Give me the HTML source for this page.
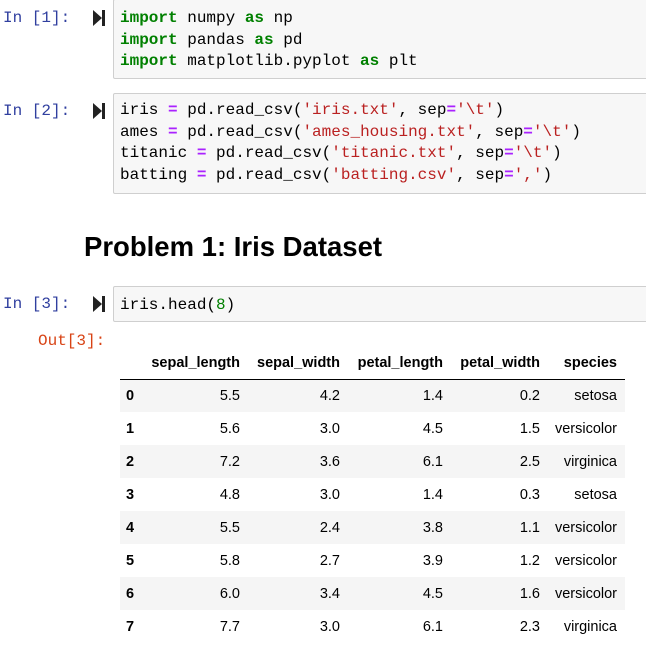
<!DOCTYPE html>
<html><head><style>
body{margin:0;width:646px;height:646px;overflow:hidden;background:#fff;position:relative;font-family:"Liberation Sans",sans-serif}
.mono{font-family:"Liberation Mono",monospace;font-size:16px}
.p{position:absolute;left:3px;color:#303F9F}
.box{position:absolute;left:113px;width:560px;background:#f7f7f7;border:1px solid #cfcfcf;border-radius:2px;box-sizing:border-box}
.code{position:absolute;left:6px;white-space:pre;line-height:21.7px;color:#000}
.k{color:#008000;font-weight:bold}.o{color:#AA22FF;font-weight:bold}.s{color:#BA2121}.n{color:#008000}
.run{position:absolute;left:93px;width:12px;height:16px}
table{position:absolute;left:120px;top:348px;width:505px;table-layout:fixed;border-collapse:collapse;font-size:14.5px;color:#000}
td,th{height:33px;padding:0 0 0 0;text-align:right;box-sizing:border-box;white-space:nowrap}
th{font-weight:bold}
thead th{height:31px;border-bottom:1px solid #000}
tbody tr:nth-child(odd){background:#f5f5f5}
tbody th{text-align:left;padding-left:6px}
</style></head><body>
<div class="mono p" style="top:9px">In [1]:</div>
<svg class="run" style="top:10px" viewBox="0 0 12 16"><path d="M0 0L9 8L0 16Z" fill="#222"/><rect x="9" y="0" width="3" height="16" fill="#222"/></svg>
<div class="box" style="top:-1px;height:80px"><div class="code mono" style="top:8px"><span class="k">import</span> numpy <span class="k">as</span> np
<span class="k">import</span> pandas <span class="k">as</span> pd
<span class="k">import</span> matplotlib.pyplot <span class="k">as</span> plt</div></div>

<div class="mono p" style="top:102px">In [2]:</div>
<svg class="run" style="top:103px" viewBox="0 0 12 16"><path d="M0 0L9 8L0 16Z" fill="#222"/><rect x="9" y="0" width="3" height="16" fill="#222"/></svg>
<div class="box" style="top:93px;height:101px"><div class="code mono" style="top:6px">iris <span class="o">=</span> pd.read_csv(<span class="s">'iris.txt'</span>, sep<span class="o">=</span><span class="s">'\t'</span>)
ames <span class="o">=</span> pd.read_csv(<span class="s">'ames_housing.txt'</span>, sep<span class="o">=</span><span class="s">'\t'</span>)
titanic <span class="o">=</span> pd.read_csv(<span class="s">'titanic.txt'</span>, sep<span class="o">=</span><span class="s">'\t'</span>)
batting <span class="o">=</span> pd.read_csv(<span class="s">'batting.csv'</span>, sep<span class="o">=</span><span class="s">','</span>)</div></div>

<div style="position:absolute;left:84px;top:231px;font-size:27.5px;font-weight:bold;color:#000">Problem 1: Iris Dataset</div>

<div class="mono p" style="top:295px">In [3]:</div>
<svg class="run" style="top:296px" viewBox="0 0 12 16"><path d="M0 0L9 8L0 16Z" fill="#222"/><rect x="9" y="0" width="3" height="16" fill="#222"/></svg>
<div class="box" style="top:286px;height:36px"><div class="code mono" style="top:8px">iris.head(<span class="n">8</span>)</div></div>
<div class="mono" style="position:absolute;left:38px;top:332px;color:#D84315">Out[3]:</div>

<table>
<colgroup><col style="width:26px"><col style="width:94px"><col style="width:100px"><col style="width:103px"><col style="width:97px"><col style="width:85px"></colgroup>
<thead><tr><th></th><th>sepal_length</th><th>sepal_width</th><th>petal_length</th><th>petal_width</th><th style="padding-right:8px">species</th></tr></thead>
<tbody>
<tr><th>0</th><td>5.5</td><td>4.2</td><td>1.4</td><td>0.2</td><td style="padding-right:8px">setosa</td></tr>
<tr><th>1</th><td>5.6</td><td>3.0</td><td>4.5</td><td>1.5</td><td style="padding-right:8px">versicolor</td></tr>
<tr><th>2</th><td>7.2</td><td>3.6</td><td>6.1</td><td>2.5</td><td style="padding-right:8px">virginica</td></tr>
<tr><th>3</th><td>4.8</td><td>3.0</td><td>1.4</td><td>0.3</td><td style="padding-right:8px">setosa</td></tr>
<tr><th>4</th><td>5.5</td><td>2.4</td><td>3.8</td><td>1.1</td><td style="padding-right:8px">versicolor</td></tr>
<tr><th>5</th><td>5.8</td><td>2.7</td><td>3.9</td><td>1.2</td><td style="padding-right:8px">versicolor</td></tr>
<tr><th>6</th><td>6.0</td><td>3.4</td><td>4.5</td><td>1.6</td><td style="padding-right:8px">versicolor</td></tr>
<tr><th>7</th><td>7.7</td><td>3.0</td><td>6.1</td><td>2.3</td><td style="padding-right:8px">virginica</td></tr>
</tbody></table>
</body></html>
